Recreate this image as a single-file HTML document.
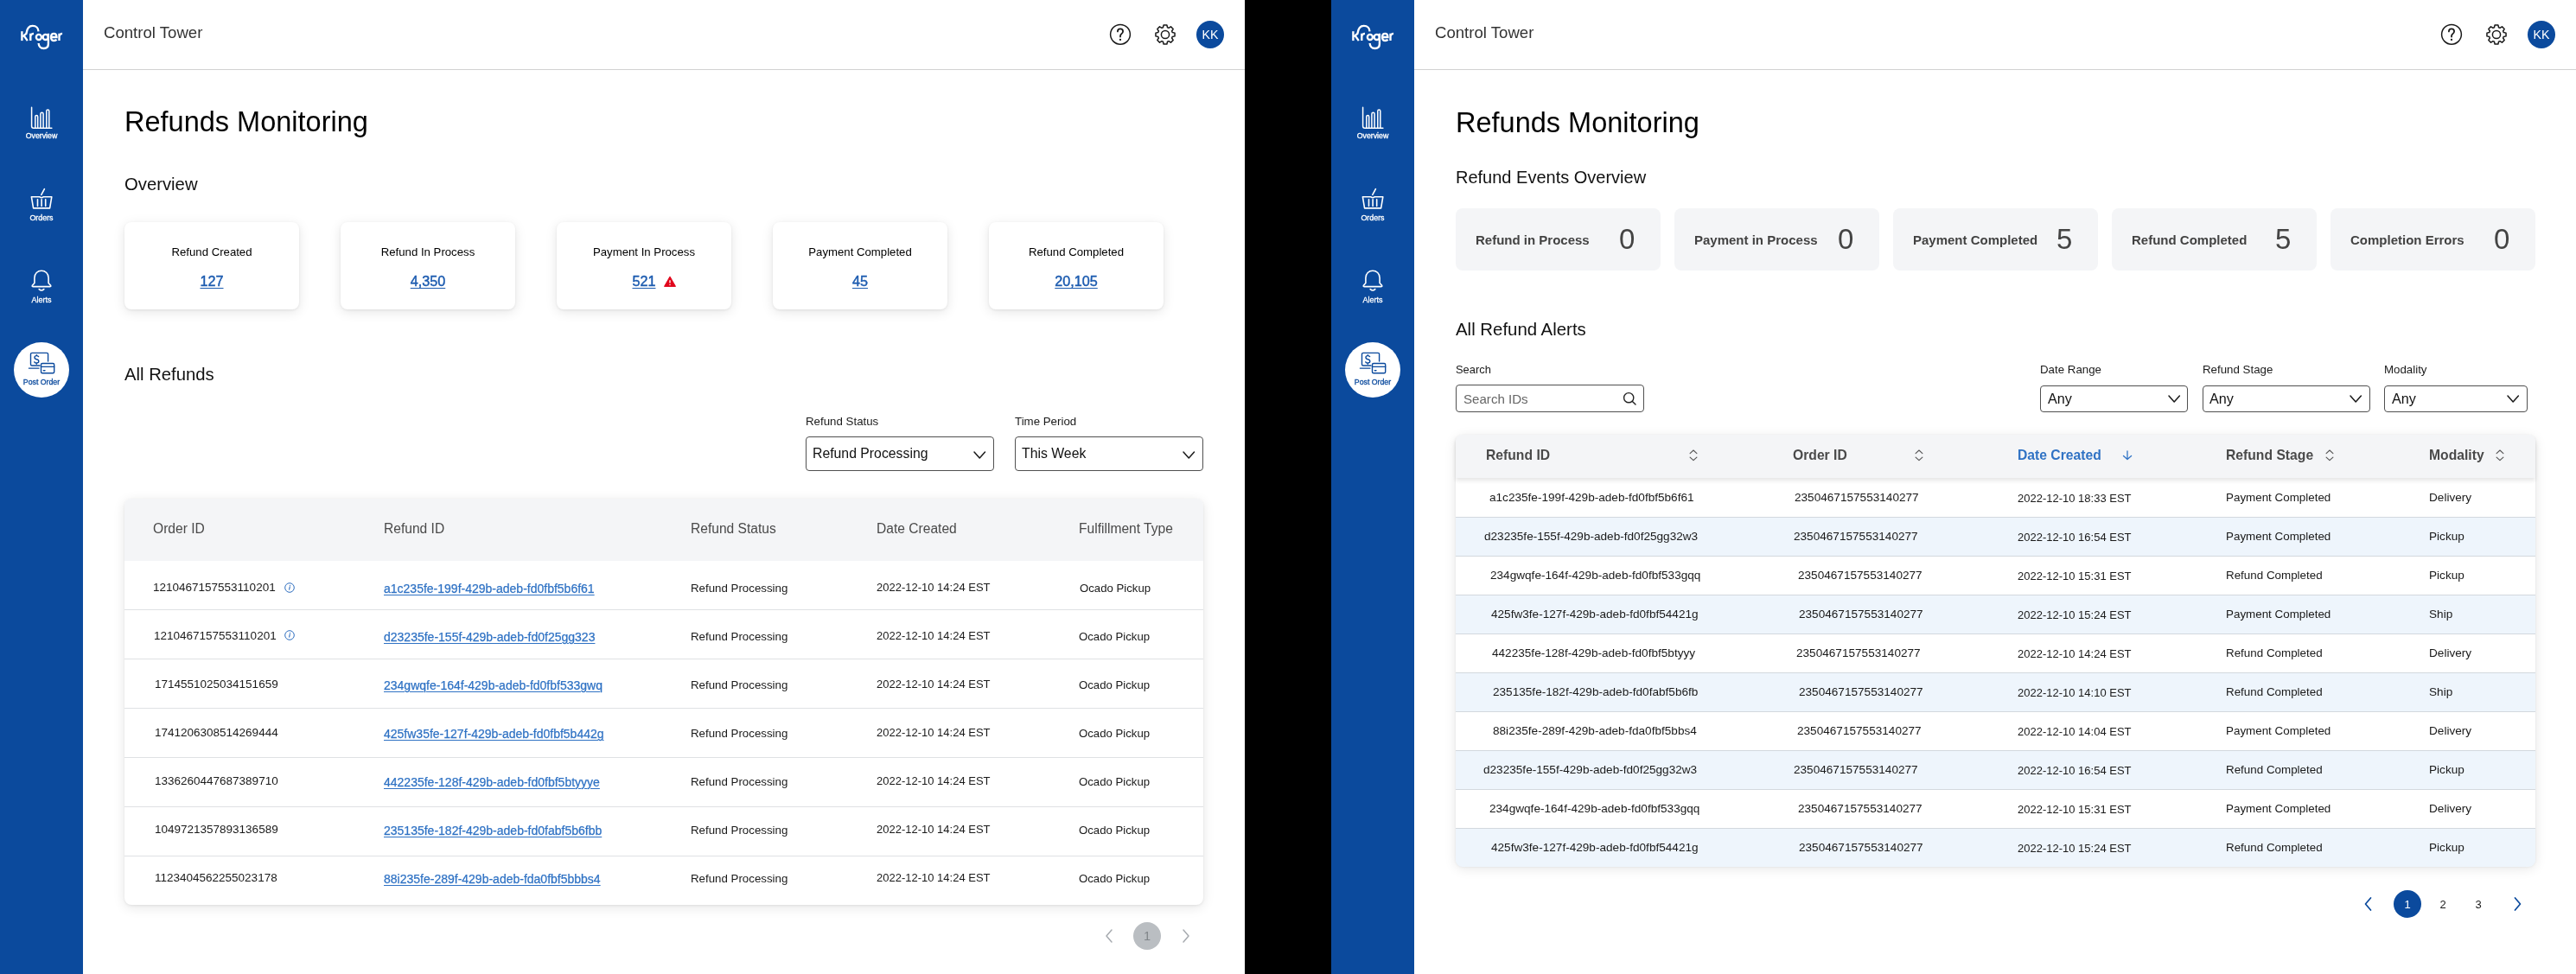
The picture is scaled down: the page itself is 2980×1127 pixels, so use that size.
<!DOCTYPE html>
<html><head><meta charset="utf-8"><title>Refunds Monitoring</title>
<style>
*{box-sizing:border-box;margin:0;padding:0}
html,body{width:2980px;height:1127px;overflow:hidden;background:#000;font-family:"Liberation Sans",sans-serif;color:#000}
.panel{position:absolute;top:0;width:1440px;height:1127px;background:#fff;overflow:hidden}
.side{position:absolute;left:0;top:0;width:96px;height:1127px;background:#0b4a9d}
.hdr{position:absolute;left:96px;top:0;width:1344px;height:81px;border-bottom:1px solid #d2d2d2;background:#fff}
.t{position:absolute;white-space:nowrap;line-height:1;will-change:transform}
.ic{position:absolute;overflow:visible}
.av{position:absolute;left:1384px;top:24px;width:32px;height:32px;border-radius:50%;background:#0b4a9d}
.po{position:absolute;left:16px;top:396px;width:64px;height:64px;border-radius:50%;background:#fff}
.cardl{position:absolute;top:257px;width:202px;height:101px;background:#fff;border-radius:8px;box-shadow:0 3px 14px rgba(0,0,0,.10),0 1px 3px rgba(0,0,0,.07)}
.cardr{position:absolute;top:241px;width:237px;height:72px;background:#f4f5f7;border-radius:8px}
.u{text-decoration:underline;text-underline-offset:2px;text-decoration-thickness:1px}
.ul{text-decoration:underline;text-underline-offset:2px;text-decoration-thickness:1px}
.sel{position:absolute;border:1px solid #505050;border-radius:4px;background:#fff}
.tbl{position:absolute;background:#fff;border-radius:8px;box-shadow:0 3px 14px rgba(0,0,0,.10),0 1px 3px rgba(0,0,0,.07);overflow:hidden}
.th{position:absolute;left:0;top:0;width:100%;background:#f4f5f7}
.thr{position:absolute;background:#f4f5f7;border-radius:8px 8px 0 0;box-shadow:0 3px 5px rgba(0,0,0,.10)}
.hl{position:absolute;height:1px;background:#dfe1e4}
.hl2{position:absolute;height:1px;background:#d3d8de}
.rr{position:absolute;height:45px}
.pg{position:absolute;width:32px;height:32px;border-radius:50%}
</style></head><body>
<div class="panel" style="left:0">
<div class="side">
<svg class="ic" style="left:0;top:0" width="96" height="70" viewBox="0 0 96 70">
<g fill="none" stroke="#fff" stroke-width="2.35" stroke-linecap="butt">
<path d="M25.4 36.2V47.1"/>
<path d="M26.2 42.4 L30.4 38.8 C31.2 32.8 33.6 29.9 37.7 29.9 C42 29.9 44.4 32.9 44.5 36.4"/>
<path d="M27.9 41.6 L31.8 47.1"/>
<path d="M35.3 47.1V38.7 M35.3 41.8 C35.9 39.6 37.2 38.9 39 38.9"/>
<circle cx="44.9" cy="42.9" r="3.05"/>
<circle cx="52.7" cy="42.9" r="3.05"/>
<path d="M55.9 38.7 V50.8 C55.9 54.3 53.8 56 50.6 56 C47.3 56 44.9 53.7 44.6 50"/>
<path d="M59.6 43 H65.5 C65.4 40.5 64 38.9 62.4 38.9 C60.3 38.9 59 40.7 59 42.9 C59 45.3 60.5 47 62.6 47 C63.8 47 64.9 46.5 65.5 45.7"/>
<path d="M68.5 47.1V38.7 M68.5 41.8 C69.1 39.6 70.3 38.9 72.1 38.9"/>
</g></svg>
<svg class="ic" style="left:0;top:115px" width="96" height="40" viewBox="0 115 96 40">
<g fill="none" stroke="#fff" stroke-width="1.5" stroke-linecap="round" stroke-linejoin="round">
<path d="M36.6 124.3 V146 Q36.6 148.2 38.8 148.2 H59.9"/>
<path d="M40.8 148 V135 Q40.8 133.5 42.25 133.5 Q43.7 133.5 43.7 135 V148"/>
<path d="M46.9 148 V131.9 Q46.9 130.3 48.5 130.3 Q50.1 130.3 50.1 131.9 V148"/>
<path d="M53.8 148 V128.6 Q53.8 127.1 55.3 127.1 Q56.8 127.1 56.8 128.6 V148"/>
</g></svg>
<div class="t " style="left:0.0px;top:153.2px;font-size:8.8px;color:#fff;width:96px;text-align:center;left:0;-webkit-text-stroke:0.3px #fff;">Overview</div>
<svg class="ic" style="left:0;top:212px" width="96" height="34" viewBox="0 212 96 34">
<g fill="none" stroke="#fff" stroke-width="1.6" stroke-linecap="round" stroke-linejoin="round">
<path d="M51.4 218.6 L47.8 225.4"/>
<path d="M36.4 227.8 H46 Q48 229.5 50 227.8 H59.8 L57.6 240.9 H38.6 Z"/>
<path d="M43.5 230.8 V238.4 M48.1 230.8 V238.4 M52.7 230.8 V238.4"/>
</g></svg>
<div class="t " style="left:0.0px;top:248.2px;font-size:8.9px;color:#fff;width:96px;text-align:center;left:0;-webkit-text-stroke:0.3px #fff;">Orders</div>
<svg class="ic" style="left:0;top:308px" width="96" height="32" viewBox="0 308 96 32">
<g fill="none" stroke="#fff" stroke-width="1.6" stroke-linecap="round" stroke-linejoin="round">
<path d="M39.9 327.5 V321.5 C39.9 316.5 43.5 313.3 48 313.3 C52.5 313.3 56.1 316.5 56.1 321.5 V327.5 L58.6 330.3 Q59.3 331.6 58 331.6 H38 Q36.7 331.6 37.4 330.3 Z"/>
<path d="M45.2 334.6 Q48 337.4 50.8 334.6"/>
</g></svg>
<div class="t " style="left:0.0px;top:343.1px;font-size:9.0px;color:#fff;width:96px;text-align:center;left:0;-webkit-text-stroke:0.3px #fff;">Alerts</div>
<div class="po"></div>
<svg class="ic" style="left:0;top:404px" width="96" height="32" viewBox="0 404 96 32">
<g fill="none" stroke="#0b4a9d" stroke-width="1.4" stroke-linecap="round" stroke-linejoin="round">
<path d="M46 423 H37 Q35.5 423 35.5 421.5 V409.8 Q35.5 408.4 37 408.4 H54.2 Q55.6 408.4 55.6 409.8 V418"/>
<path d="M33.4 426.1 H45"/>
<rect x="47.5" y="420.5" width="15.2" height="11.2" rx="1.5"/>
<path d="M47.5 424.4 H62.7"/>
<path d="M50.3 428.7 H52"/>
<path d="M44.6 412.6 Q43.8 411.6 42.3 411.6 Q40 411.6 40 413.5 Q40 415.3 42.3 415.7 Q44.8 416.2 44.8 418 Q44.8 420 42.3 420 Q40.5 420 39.8 418.8 M42.3 410.6 V411.6 M42.3 420 V421.2"/>
</g></svg>
<div class="t " style="left:0.0px;top:437.9px;font-size:8.75px;color:#0b4a9d;width:96px;text-align:center;left:0;-webkit-text-stroke:0.3px #0b4a9d;">Post Order</div>
</div>
<div class="hdr"></div>
<div class="t " style="left:120.0px;top:29.3px;font-size:18.6px;color:#333;">Control Tower</div>
<svg class="ic" style="left:1280px;top:24px" width="32" height="32" viewBox="1280 24 32 32">
<circle cx="1296" cy="39.8" r="11.4" fill="none" stroke="#1a1a1a" stroke-width="1.5"/>
<path d="M1292.9 36.4 Q1292.9 33.4 1296 33.4 Q1299.1 33.4 1299.1 36.3 Q1299.1 38.3 1297.1 39.5 Q1296 40.2 1296 42 V42.6" fill="none" stroke="#1a1a1a" stroke-width="1.8" stroke-linecap="round"/>
<circle cx="1296" cy="45.9" r="1.15" fill="#1a1a1a"/>
</svg>
<svg class="ic" style="left:1332px;top:24px" width="32" height="32" viewBox="1332 24 32 32">
<path d="M1345.46 31.78 L1346.11 28.96 L1349.89 28.96 L1350.54 31.78 L1352.01 32.39 L1354.47 30.85 L1357.15 33.53 L1355.61 35.99 L1356.22 37.46 L1359.04 38.11 L1359.04 41.89 L1356.22 42.54 L1355.61 44.01 L1357.15 46.47 L1354.47 49.15 L1352.01 47.61 L1350.54 48.22 L1349.89 51.04 L1346.11 51.04 L1345.46 48.22 L1343.99 47.61 L1341.53 49.15 L1338.85 46.47 L1340.39 44.01 L1339.78 42.54 L1336.96 41.89 L1336.96 38.11 L1339.78 37.46 L1340.39 35.99 L1338.85 33.53 L1341.53 30.85 L1343.99 32.39 Z" fill="none" stroke="#1a1a1a" stroke-width="1.5" stroke-linejoin="round"/>
<circle cx="1348" cy="40" r="4.6" fill="none" stroke="#1a1a1a" stroke-width="1.5"/>
</svg>
<div class="av"></div>
<div class="t" style="left:1380.0px;top:33.0px;width:40px;text-align:center;font-size:14.2px;color:#fff;">KK</div>
<div class="t " style="left:144.0px;top:124.5px;font-size:32.5px;color:#000;">Refunds Monitoring</div>
<div class="t " style="left:144.0px;top:202.8px;font-size:20.3px;color:#111;">Overview</div>
<div class="cardl" style="left:144px"></div>
<div class="t" style="left:145.0px;top:284.8px;width:200px;text-align:center;font-size:13.2px;color:#000;">Refund Created</div>
<div class="t" style="left:145.0px;top:317.0px;width:200px;text-align:center;font-size:16.2px;color:#1d5cb0;-webkit-text-stroke:0.45px #1d5cb0;"><span class="u">127</span></div>
<div class="cardl" style="left:394px"></div>
<div class="t" style="left:395.0px;top:284.8px;width:200px;text-align:center;font-size:13.2px;color:#000;">Refund In Process</div>
<div class="t" style="left:395.0px;top:317.0px;width:200px;text-align:center;font-size:16.2px;color:#1d5cb0;-webkit-text-stroke:0.45px #1d5cb0;"><span class="u">4,350</span></div>
<div class="cardl" style="left:644px"></div>
<div class="t" style="left:645.0px;top:284.8px;width:200px;text-align:center;font-size:13.2px;color:#000;">Payment In Process</div>
<div class="t" style="left:695.0px;top:317.0px;width:100px;text-align:center;font-size:16.2px;color:#1d5cb0;-webkit-text-stroke:0.45px #1d5cb0;"><span class="u">521</span></div>
<svg class="ic" style="left:767px;top:318px" width="16" height="16" viewBox="0 0 16 16">
<path d="M8 2 L14.5 13.4 H1.5 Z" fill="#e1061b" stroke="#e1061b" stroke-width="1" stroke-linejoin="round"/>
<path d="M8 6.2 V9.6" stroke="#fff" stroke-width="1.3"/><circle cx="8" cy="11.4" r="0.75" fill="#fff"/></svg>
<div class="cardl" style="left:894px"></div>
<div class="t" style="left:895.0px;top:284.8px;width:200px;text-align:center;font-size:13.2px;color:#000;">Payment Completed</div>
<div class="t" style="left:895.0px;top:317.0px;width:200px;text-align:center;font-size:16.2px;color:#1d5cb0;-webkit-text-stroke:0.45px #1d5cb0;"><span class="u">45</span></div>
<div class="cardl" style="left:1144px"></div>
<div class="t" style="left:1145.0px;top:284.8px;width:200px;text-align:center;font-size:13.2px;color:#000;">Refund Completed</div>
<div class="t" style="left:1145.0px;top:317.0px;width:200px;text-align:center;font-size:16.2px;color:#1d5cb0;-webkit-text-stroke:0.45px #1d5cb0;"><span class="u">20,105</span></div>
<div class="t " style="left:144.0px;top:422.8px;font-size:20.3px;color:#111;">All Refunds</div>
<div class="t " style="left:932.0px;top:480.9px;font-size:13.3px;color:#1a1a1a;">Refund Status</div>
<div class="t " style="left:1174.0px;top:480.9px;font-size:13.3px;color:#1a1a1a;">Time Period</div>
<div class="sel" style="left:932px;top:505px;width:218px;height:40px"></div>
<div class="sel" style="left:1174px;top:505px;width:218px;height:40px"></div>
<div class="t " style="left:940.0px;top:517.3px;font-size:15.8px;color:#111;">Refund Processing</div>
<div class="t " style="left:1182.0px;top:517.3px;font-size:15.8px;color:#111;">This Week</div>
<svg class="ic" style="left:1125px;top:520.5px" width="16.5" height="11" viewBox="1125 520.5 16.5 11"><path d="M1127 522.5 L1133.25 529.5 L1139.5 522.5" fill="none" stroke="#1a1a1a" stroke-width="1.5" stroke-linecap="round" stroke-linejoin="round"/></svg>
<svg class="ic" style="left:1367px;top:520.5px" width="16.5" height="11" viewBox="1367 520.5 16.5 11"><path d="M1369 522.5 L1375.25 529.5 L1381.5 522.5" fill="none" stroke="#1a1a1a" stroke-width="1.5" stroke-linecap="round" stroke-linejoin="round"/></svg>
<div class="tbl" style="left:144px;top:577px;width:1248px;height:470px"><div class="th" style="height:72px"></div></div>
<div class="t " style="left:176.7px;top:604.3px;font-size:15.6px;color:#4a4a4a;">Order ID</div>
<div class="t " style="left:444.0px;top:604.3px;font-size:15.6px;color:#4a4a4a;">Refund ID</div>
<div class="t " style="left:799.3px;top:604.3px;font-size:15.6px;color:#4a4a4a;">Refund Status</div>
<div class="t " style="left:1014.2px;top:604.3px;font-size:15.6px;color:#4a4a4a;">Date Created</div>
<div class="t " style="left:1248.0px;top:604.3px;font-size:15.6px;color:#4a4a4a;">Fulfillment Type</div>
<div class="hl" style="left:144px;top:705px;width:1248px"></div>
<div class="hl" style="left:144px;top:762px;width:1248px"></div>
<div class="hl" style="left:144px;top:819px;width:1248px"></div>
<div class="hl" style="left:144px;top:876px;width:1248px"></div>
<div class="hl" style="left:144px;top:933px;width:1248px"></div>
<div class="hl" style="left:144px;top:990px;width:1248px"></div>
<div class="t " style="left:176.7px;top:672.6px;font-size:13.5px;color:#1a1a1a;">1210467157553110201</div>
<svg class="ic" style="left:327px;top:671.5px" width="16" height="16" viewBox="0 0 16 16"><circle cx="8" cy="8" r="5.3" fill="none" stroke="#2f6fc0" stroke-width="1"/><path d="M8.3 6.9 L7.6 10.2" stroke="#2f6fc0" stroke-width="1.1" stroke-linecap="round"/><circle cx="8.5" cy="5.3" r="0.6" fill="#2f6fc0"/></svg>
<div class="t " style="left:444.0px;top:674.1px;font-size:14.0px;color:#2f72c4;-webkit-text-stroke:0.25px #2f72c4;"><span class="ul">a1c235fe-199f-429b-adeb-fd0fbf5b6f61</span></div>
<div class="t " style="left:799.3px;top:673.7px;font-size:13.3px;color:#1a1a1a;">Refund Processing</div>
<div class="t " style="left:1014.2px;top:673.0px;font-size:13.0px;color:#1a1a1a;">2022-12-10 14:24 EST</div>
<div class="t " style="left:1249.0px;top:673.8px;font-size:13.2px;color:#1a1a1a;">Ocado Pickup</div>
<div class="t " style="left:178.0px;top:728.6px;font-size:13.5px;color:#1a1a1a;">1210467157553110201</div>
<svg class="ic" style="left:327px;top:726.5px" width="16" height="16" viewBox="0 0 16 16"><circle cx="8" cy="8" r="5.3" fill="none" stroke="#2f6fc0" stroke-width="1"/><path d="M8.3 6.9 L7.6 10.2" stroke="#2f6fc0" stroke-width="1.1" stroke-linecap="round"/><circle cx="8.5" cy="5.3" r="0.6" fill="#2f6fc0"/></svg>
<div class="t " style="left:444.0px;top:730.1px;font-size:14.0px;color:#2f72c4;-webkit-text-stroke:0.25px #2f72c4;"><span class="ul">d23235fe-155f-429b-adeb-fd0f25gg323</span></div>
<div class="t " style="left:799.3px;top:729.7px;font-size:13.3px;color:#1a1a1a;">Refund Processing</div>
<div class="t " style="left:1014.2px;top:729.0px;font-size:13.0px;color:#1a1a1a;">2022-12-10 14:24 EST</div>
<div class="t " style="left:1248.0px;top:729.8px;font-size:13.2px;color:#1a1a1a;">Ocado Pickup</div>
<div class="t " style="left:178.5px;top:784.6px;font-size:13.5px;color:#1a1a1a;">1714551025034151659</div>
<div class="t " style="left:444.0px;top:786.1px;font-size:14.0px;color:#2f72c4;-webkit-text-stroke:0.25px #2f72c4;"><span class="ul">234gwqfe-164f-429b-adeb-fd0fbf533gwq</span></div>
<div class="t " style="left:799.3px;top:785.7px;font-size:13.3px;color:#1a1a1a;">Refund Processing</div>
<div class="t " style="left:1014.2px;top:785.0px;font-size:13.0px;color:#1a1a1a;">2022-12-10 14:24 EST</div>
<div class="t " style="left:1248.0px;top:785.8px;font-size:13.2px;color:#1a1a1a;">Ocado Pickup</div>
<div class="t " style="left:178.5px;top:840.6px;font-size:13.5px;color:#1a1a1a;">1741206308514269444</div>
<div class="t " style="left:444.0px;top:842.1px;font-size:14.0px;color:#2f72c4;-webkit-text-stroke:0.25px #2f72c4;"><span class="ul">425fw35fe-127f-429b-adeb-fd0fbf5b442g</span></div>
<div class="t " style="left:799.3px;top:841.7px;font-size:13.3px;color:#1a1a1a;">Refund Processing</div>
<div class="t " style="left:1014.2px;top:841.0px;font-size:13.0px;color:#1a1a1a;">2022-12-10 14:24 EST</div>
<div class="t " style="left:1248.0px;top:841.8px;font-size:13.2px;color:#1a1a1a;">Ocado Pickup</div>
<div class="t " style="left:178.5px;top:896.6px;font-size:13.5px;color:#1a1a1a;">1336260447687389710</div>
<div class="t " style="left:444.0px;top:898.1px;font-size:14.0px;color:#2f72c4;-webkit-text-stroke:0.25px #2f72c4;"><span class="ul">442235fe-128f-429b-adeb-fd0fbf5btyyye</span></div>
<div class="t " style="left:799.3px;top:897.7px;font-size:13.3px;color:#1a1a1a;">Refund Processing</div>
<div class="t " style="left:1014.2px;top:897.0px;font-size:13.0px;color:#1a1a1a;">2022-12-10 14:24 EST</div>
<div class="t " style="left:1248.0px;top:897.8px;font-size:13.2px;color:#1a1a1a;">Ocado Pickup</div>
<div class="t " style="left:178.5px;top:952.6px;font-size:13.5px;color:#1a1a1a;">1049721357893136589</div>
<div class="t " style="left:444.0px;top:954.1px;font-size:14.0px;color:#2f72c4;-webkit-text-stroke:0.25px #2f72c4;"><span class="ul">235135fe-182f-429b-adeb-fd0fabf5b6fbb</span></div>
<div class="t " style="left:799.3px;top:953.7px;font-size:13.3px;color:#1a1a1a;">Refund Processing</div>
<div class="t " style="left:1014.2px;top:953.0px;font-size:13.0px;color:#1a1a1a;">2022-12-10 14:24 EST</div>
<div class="t " style="left:1248.0px;top:953.8px;font-size:13.2px;color:#1a1a1a;">Ocado Pickup</div>
<div class="t " style="left:178.5px;top:1008.6px;font-size:13.5px;color:#1a1a1a;">1123404562255023178</div>
<div class="t " style="left:444.0px;top:1010.1px;font-size:14.0px;color:#2f72c4;-webkit-text-stroke:0.25px #2f72c4;"><span class="ul">88i235fe-289f-429b-adeb-fda0fbf5bbbs4</span></div>
<div class="t " style="left:799.3px;top:1009.7px;font-size:13.3px;color:#1a1a1a;">Refund Processing</div>
<div class="t " style="left:1014.2px;top:1009.0px;font-size:13.0px;color:#1a1a1a;">2022-12-10 14:24 EST</div>
<div class="t " style="left:1248.0px;top:1009.8px;font-size:13.2px;color:#1a1a1a;">Ocado Pickup</div>
<svg class="ic" style="left:1274px;top:1073px" width="20" height="20" viewBox="1274 1073 20 20"><path d="M1286 1076 L1280 1083 L1286 1090" fill="none" stroke="#a7abb0" stroke-width="1.5" stroke-linecap="round" stroke-linejoin="round"/></svg>
<div class="pg" style="left:1311px;top:1067px;background:#babec2"></div>
<div class="t" style="left:1312.0px;top:1076.2px;width:30px;text-align:center;font-size:14.5px;color:#7f8489;">1</div>
<svg class="ic" style="left:1364px;top:1073px" width="20" height="20" viewBox="1364 1073 20 20"><path d="M1369 1076 L1375 1083 L1369 1090" fill="none" stroke="#a7abb0" stroke-width="1.5" stroke-linecap="round" stroke-linejoin="round"/></svg>
</div>
<div class="panel" style="left:1540px">
<div class="side">
<svg class="ic" style="left:0;top:0" width="96" height="70" viewBox="0 0 96 70">
<g fill="none" stroke="#fff" stroke-width="2.35" stroke-linecap="butt">
<path d="M25.4 36.2V47.1"/>
<path d="M26.2 42.4 L30.4 38.8 C31.2 32.8 33.6 29.9 37.7 29.9 C42 29.9 44.4 32.9 44.5 36.4"/>
<path d="M27.9 41.6 L31.8 47.1"/>
<path d="M35.3 47.1V38.7 M35.3 41.8 C35.9 39.6 37.2 38.9 39 38.9"/>
<circle cx="44.9" cy="42.9" r="3.05"/>
<circle cx="52.7" cy="42.9" r="3.05"/>
<path d="M55.9 38.7 V50.8 C55.9 54.3 53.8 56 50.6 56 C47.3 56 44.9 53.7 44.6 50"/>
<path d="M59.6 43 H65.5 C65.4 40.5 64 38.9 62.4 38.9 C60.3 38.9 59 40.7 59 42.9 C59 45.3 60.5 47 62.6 47 C63.8 47 64.9 46.5 65.5 45.7"/>
<path d="M68.5 47.1V38.7 M68.5 41.8 C69.1 39.6 70.3 38.9 72.1 38.9"/>
</g></svg>
<svg class="ic" style="left:0;top:115px" width="96" height="40" viewBox="0 115 96 40">
<g fill="none" stroke="#fff" stroke-width="1.5" stroke-linecap="round" stroke-linejoin="round">
<path d="M36.6 124.3 V146 Q36.6 148.2 38.8 148.2 H59.9"/>
<path d="M40.8 148 V135 Q40.8 133.5 42.25 133.5 Q43.7 133.5 43.7 135 V148"/>
<path d="M46.9 148 V131.9 Q46.9 130.3 48.5 130.3 Q50.1 130.3 50.1 131.9 V148"/>
<path d="M53.8 148 V128.6 Q53.8 127.1 55.3 127.1 Q56.8 127.1 56.8 128.6 V148"/>
</g></svg>
<div class="t " style="left:0.0px;top:153.2px;font-size:8.8px;color:#fff;width:96px;text-align:center;left:0;-webkit-text-stroke:0.3px #fff;">Overview</div>
<svg class="ic" style="left:0;top:212px" width="96" height="34" viewBox="0 212 96 34">
<g fill="none" stroke="#fff" stroke-width="1.6" stroke-linecap="round" stroke-linejoin="round">
<path d="M51.4 218.6 L47.8 225.4"/>
<path d="M36.4 227.8 H46 Q48 229.5 50 227.8 H59.8 L57.6 240.9 H38.6 Z"/>
<path d="M43.5 230.8 V238.4 M48.1 230.8 V238.4 M52.7 230.8 V238.4"/>
</g></svg>
<div class="t " style="left:0.0px;top:248.2px;font-size:8.9px;color:#fff;width:96px;text-align:center;left:0;-webkit-text-stroke:0.3px #fff;">Orders</div>
<svg class="ic" style="left:0;top:308px" width="96" height="32" viewBox="0 308 96 32">
<g fill="none" stroke="#fff" stroke-width="1.6" stroke-linecap="round" stroke-linejoin="round">
<path d="M39.9 327.5 V321.5 C39.9 316.5 43.5 313.3 48 313.3 C52.5 313.3 56.1 316.5 56.1 321.5 V327.5 L58.6 330.3 Q59.3 331.6 58 331.6 H38 Q36.7 331.6 37.4 330.3 Z"/>
<path d="M45.2 334.6 Q48 337.4 50.8 334.6"/>
</g></svg>
<div class="t " style="left:0.0px;top:343.1px;font-size:9.0px;color:#fff;width:96px;text-align:center;left:0;-webkit-text-stroke:0.3px #fff;">Alerts</div>
<div class="po"></div>
<svg class="ic" style="left:0;top:404px" width="96" height="32" viewBox="0 404 96 32">
<g fill="none" stroke="#0b4a9d" stroke-width="1.4" stroke-linecap="round" stroke-linejoin="round">
<path d="M46 423 H37 Q35.5 423 35.5 421.5 V409.8 Q35.5 408.4 37 408.4 H54.2 Q55.6 408.4 55.6 409.8 V418"/>
<path d="M33.4 426.1 H45"/>
<rect x="47.5" y="420.5" width="15.2" height="11.2" rx="1.5"/>
<path d="M47.5 424.4 H62.7"/>
<path d="M50.3 428.7 H52"/>
<path d="M44.6 412.6 Q43.8 411.6 42.3 411.6 Q40 411.6 40 413.5 Q40 415.3 42.3 415.7 Q44.8 416.2 44.8 418 Q44.8 420 42.3 420 Q40.5 420 39.8 418.8 M42.3 410.6 V411.6 M42.3 420 V421.2"/>
</g></svg>
<div class="t " style="left:0.0px;top:437.9px;font-size:8.75px;color:#0b4a9d;width:96px;text-align:center;left:0;-webkit-text-stroke:0.3px #0b4a9d;">Post Order</div>
</div>
<div class="hdr"></div>
<div class="t " style="left:120.0px;top:29.3px;font-size:18.6px;color:#333;">Control Tower</div>
<svg class="ic" style="left:1280px;top:24px" width="32" height="32" viewBox="1280 24 32 32">
<circle cx="1296" cy="39.8" r="11.4" fill="none" stroke="#1a1a1a" stroke-width="1.5"/>
<path d="M1292.9 36.4 Q1292.9 33.4 1296 33.4 Q1299.1 33.4 1299.1 36.3 Q1299.1 38.3 1297.1 39.5 Q1296 40.2 1296 42 V42.6" fill="none" stroke="#1a1a1a" stroke-width="1.8" stroke-linecap="round"/>
<circle cx="1296" cy="45.9" r="1.15" fill="#1a1a1a"/>
</svg>
<svg class="ic" style="left:1332px;top:24px" width="32" height="32" viewBox="1332 24 32 32">
<path d="M1345.46 31.78 L1346.11 28.96 L1349.89 28.96 L1350.54 31.78 L1352.01 32.39 L1354.47 30.85 L1357.15 33.53 L1355.61 35.99 L1356.22 37.46 L1359.04 38.11 L1359.04 41.89 L1356.22 42.54 L1355.61 44.01 L1357.15 46.47 L1354.47 49.15 L1352.01 47.61 L1350.54 48.22 L1349.89 51.04 L1346.11 51.04 L1345.46 48.22 L1343.99 47.61 L1341.53 49.15 L1338.85 46.47 L1340.39 44.01 L1339.78 42.54 L1336.96 41.89 L1336.96 38.11 L1339.78 37.46 L1340.39 35.99 L1338.85 33.53 L1341.53 30.85 L1343.99 32.39 Z" fill="none" stroke="#1a1a1a" stroke-width="1.5" stroke-linejoin="round"/>
<circle cx="1348" cy="40" r="4.6" fill="none" stroke="#1a1a1a" stroke-width="1.5"/>
</svg>
<div class="av"></div>
<div class="t" style="left:1380.0px;top:33.0px;width:40px;text-align:center;font-size:14.2px;color:#fff;">KK</div>
<div class="t " style="left:144.0px;top:125.5px;font-size:32.5px;color:#000;">Refunds Monitoring</div>
<div class="t " style="left:144.0px;top:195.3px;font-size:20.0px;color:#111;">Refund Events Overview</div>
<div class="cardr" style="left:144px"></div>
<div class="t " style="left:167.0px;top:269.6px;font-size:15.0px;font-weight:700;color:#424242;">Refund in Process</div>
<div class="t " style="left:333.0px;top:260.1px;font-size:33px;color:#444;">0</div>
<div class="cardr" style="left:397px"></div>
<div class="t " style="left:420.0px;top:269.6px;font-size:15.0px;font-weight:700;color:#424242;">Payment in Process</div>
<div class="t " style="left:586.0px;top:260.1px;font-size:33px;color:#444;">0</div>
<div class="cardr" style="left:650px"></div>
<div class="t " style="left:673.0px;top:269.6px;font-size:15.0px;font-weight:700;color:#424242;">Payment Completed</div>
<div class="t " style="left:839.0px;top:260.1px;font-size:33px;color:#444;">5</div>
<div class="cardr" style="left:903px"></div>
<div class="t " style="left:926.0px;top:269.6px;font-size:15.0px;font-weight:700;color:#424242;">Refund Completed</div>
<div class="t " style="left:1092.0px;top:260.1px;font-size:33px;color:#444;">5</div>
<div class="cardr" style="left:1156px"></div>
<div class="t " style="left:1179.0px;top:269.6px;font-size:15.0px;font-weight:700;color:#424242;">Completion Errors</div>
<div class="t " style="left:1345.0px;top:260.1px;font-size:33px;color:#444;">0</div>
<div class="t " style="left:144.0px;top:371.2px;font-size:20.4px;color:#111;">All Refund Alerts</div>
<div class="t " style="left:144.0px;top:421.6px;font-size:12.9px;color:#1a1a1a;">Search</div>
<div class="sel" style="left:144px;top:445px;width:218px;height:32px"></div>
<div class="t " style="left:152.6px;top:453.7px;font-size:15.1px;color:#666;">Search IDs</div>
<svg class="ic" style="left:335px;top:451px" width="20" height="20" viewBox="0 0 20 20"><circle cx="9.2" cy="9.2" r="5.6" fill="none" stroke="#222" stroke-width="1.4"/><path d="M13.2 13.2 L17 17" stroke="#222" stroke-width="1.4" stroke-linecap="round"/></svg>
<div class="t " style="left:820.4px;top:421.0px;font-size:13.3px;color:#1a1a1a;">Date Range</div>
<div class="sel" style="left:820.4px;top:445.5px;width:171px;height:31px"></div>
<div class="t " style="left:828.6px;top:453.3px;font-size:16.2px;color:#111;">Any</div>
<svg class="ic" style="left:966.9px;top:456px" width="16.4" height="11" viewBox="966.9 456 16.4 11"><path d="M968.9 458 L975.1 465 L981.3 458" fill="none" stroke="#1a1a1a" stroke-width="1.5" stroke-linecap="round" stroke-linejoin="round"/></svg>
<div class="t " style="left:1008.2px;top:421.0px;font-size:13.3px;color:#1a1a1a;">Refund Stage</div>
<div class="sel" style="left:1008.2px;top:445.5px;width:193.5px;height:31px"></div>
<div class="t " style="left:1016.4px;top:453.3px;font-size:16.2px;color:#111;">Any</div>
<svg class="ic" style="left:1177.2px;top:456px" width="16.4" height="11" viewBox="1177.2 456 16.4 11"><path d="M1179.2 458 L1185.4 465 L1191.6000000000001 458" fill="none" stroke="#1a1a1a" stroke-width="1.5" stroke-linecap="round" stroke-linejoin="round"/></svg>
<div class="t " style="left:1218.4px;top:421.0px;font-size:13.3px;color:#1a1a1a;">Modality</div>
<div class="sel" style="left:1218.4px;top:445.5px;width:165.2px;height:31px"></div>
<div class="t " style="left:1226.6px;top:453.3px;font-size:16.2px;color:#111;">Any</div>
<svg class="ic" style="left:1359.1px;top:456px" width="16.4" height="11" viewBox="1359.1 456 16.4 11"><path d="M1361.1 458 L1367.3 465 L1373.5 458" fill="none" stroke="#1a1a1a" stroke-width="1.5" stroke-linecap="round" stroke-linejoin="round"/></svg>
<div class="tbl" style="left:144px;top:503px;width:1249px;height:499px"></div>
<div class="rr" style="left:144px;top:553px;width:1249px;background:#fff"></div>
<div class="t " style="left:182.8px;top:569.2px;font-size:13.6px;color:#1a1a1a;">a1c235fe-199f-429b-adeb-fd0fbf5b6f61</div>
<div class="t " style="left:536.0px;top:569.2px;font-size:13.6px;color:#1a1a1a;">2350467157553140277</div>
<div class="t " style="left:794.0px;top:569.7px;font-size:13.0px;color:#1a1a1a;">2022-12-10 18:33 EST</div>
<div class="t " style="left:1035.0px;top:569.4px;font-size:13.4px;color:#1a1a1a;">Payment Completed</div>
<div class="t " style="left:1269.5px;top:569.2px;font-size:13.6px;color:#1a1a1a;">Delivery</div>
<div class="rr" style="left:144px;top:598px;width:1249px;background:#eef5fc"></div>
<div class="hl2" style="left:144px;top:598px;width:1249px"></div>
<div class="t " style="left:176.6px;top:614.2px;font-size:13.6px;color:#1a1a1a;">d23235fe-155f-429b-adeb-fd0f25gg32w3</div>
<div class="t " style="left:535.0px;top:614.2px;font-size:13.6px;color:#1a1a1a;">2350467157553140277</div>
<div class="t " style="left:794.0px;top:614.7px;font-size:13.0px;color:#1a1a1a;">2022-12-10 16:54 EST</div>
<div class="t " style="left:1035.0px;top:614.4px;font-size:13.4px;color:#1a1a1a;">Payment Completed</div>
<div class="t " style="left:1269.5px;top:614.2px;font-size:13.6px;color:#1a1a1a;">Pickup</div>
<div class="rr" style="left:144px;top:643px;width:1249px;background:#fff"></div>
<div class="hl2" style="left:144px;top:643px;width:1249px"></div>
<div class="t " style="left:183.5px;top:659.2px;font-size:13.6px;color:#1a1a1a;">234gwqfe-164f-429b-adeb-fd0fbf533gqq</div>
<div class="t " style="left:540.3px;top:659.2px;font-size:13.6px;color:#1a1a1a;">2350467157553140277</div>
<div class="t " style="left:794.0px;top:659.7px;font-size:13.0px;color:#1a1a1a;">2022-12-10 15:31 EST</div>
<div class="t " style="left:1035.0px;top:659.4px;font-size:13.4px;color:#1a1a1a;">Refund Completed</div>
<div class="t " style="left:1269.5px;top:659.2px;font-size:13.6px;color:#1a1a1a;">Pickup</div>
<div class="rr" style="left:144px;top:688px;width:1249px;background:#eef5fc"></div>
<div class="hl2" style="left:144px;top:688px;width:1249px"></div>
<div class="t " style="left:185.0px;top:704.2px;font-size:13.6px;color:#1a1a1a;">425fw3fe-127f-429b-adeb-fd0fbf54421g</div>
<div class="t " style="left:541.0px;top:704.2px;font-size:13.6px;color:#1a1a1a;">2350467157553140277</div>
<div class="t " style="left:794.0px;top:704.7px;font-size:13.0px;color:#1a1a1a;">2022-12-10 15:24 EST</div>
<div class="t " style="left:1035.0px;top:704.4px;font-size:13.4px;color:#1a1a1a;">Payment Completed</div>
<div class="t " style="left:1269.5px;top:704.2px;font-size:13.6px;color:#1a1a1a;">Ship</div>
<div class="rr" style="left:144px;top:733px;width:1249px;background:#fff"></div>
<div class="hl2" style="left:144px;top:733px;width:1249px"></div>
<div class="t " style="left:185.7px;top:749.2px;font-size:13.6px;color:#1a1a1a;">442235fe-128f-429b-adeb-fd0fbf5btyyy</div>
<div class="t " style="left:538.3px;top:749.2px;font-size:13.6px;color:#1a1a1a;">2350467157553140277</div>
<div class="t " style="left:794.0px;top:749.7px;font-size:13.0px;color:#1a1a1a;">2022-12-10 14:24 EST</div>
<div class="t " style="left:1035.0px;top:749.4px;font-size:13.4px;color:#1a1a1a;">Refund Completed</div>
<div class="t " style="left:1269.5px;top:749.2px;font-size:13.6px;color:#1a1a1a;">Delivery</div>
<div class="rr" style="left:144px;top:778px;width:1249px;background:#eef5fc"></div>
<div class="hl2" style="left:144px;top:778px;width:1249px"></div>
<div class="t " style="left:186.5px;top:794.2px;font-size:13.6px;color:#1a1a1a;">235135fe-182f-429b-adeb-fd0fabf5b6fb</div>
<div class="t " style="left:540.5px;top:794.2px;font-size:13.6px;color:#1a1a1a;">2350467157553140277</div>
<div class="t " style="left:794.0px;top:794.7px;font-size:13.0px;color:#1a1a1a;">2022-12-10 14:10 EST</div>
<div class="t " style="left:1035.0px;top:794.4px;font-size:13.4px;color:#1a1a1a;">Refund Completed</div>
<div class="t " style="left:1269.5px;top:794.2px;font-size:13.6px;color:#1a1a1a;">Ship</div>
<div class="rr" style="left:144px;top:823px;width:1249px;background:#fff"></div>
<div class="hl2" style="left:144px;top:823px;width:1249px"></div>
<div class="t " style="left:186.5px;top:839.2px;font-size:13.6px;color:#1a1a1a;">88i235fe-289f-429b-adeb-fda0fbf5bbs4</div>
<div class="t " style="left:539.0px;top:839.2px;font-size:13.6px;color:#1a1a1a;">2350467157553140277</div>
<div class="t " style="left:794.0px;top:839.7px;font-size:13.0px;color:#1a1a1a;">2022-12-10 14:04 EST</div>
<div class="t " style="left:1035.0px;top:839.4px;font-size:13.4px;color:#1a1a1a;">Payment Completed</div>
<div class="t " style="left:1269.5px;top:839.2px;font-size:13.6px;color:#1a1a1a;">Delivery</div>
<div class="rr" style="left:144px;top:868px;width:1249px;background:#eef5fc"></div>
<div class="hl2" style="left:144px;top:868px;width:1249px"></div>
<div class="t " style="left:176.4px;top:884.2px;font-size:13.6px;color:#1a1a1a;">d23235fe-155f-429b-adeb-fd0f25gg32w3</div>
<div class="t " style="left:535.3px;top:884.2px;font-size:13.6px;color:#1a1a1a;">2350467157553140277</div>
<div class="t " style="left:794.0px;top:884.7px;font-size:13.0px;color:#1a1a1a;">2022-12-10 16:54 EST</div>
<div class="t " style="left:1035.0px;top:884.4px;font-size:13.4px;color:#1a1a1a;">Refund Completed</div>
<div class="t " style="left:1269.5px;top:884.2px;font-size:13.6px;color:#1a1a1a;">Pickup</div>
<div class="rr" style="left:144px;top:913px;width:1249px;background:#fff"></div>
<div class="hl2" style="left:144px;top:913px;width:1249px"></div>
<div class="t " style="left:183.0px;top:929.2px;font-size:13.6px;color:#1a1a1a;">234gwqfe-164f-429b-adeb-fd0fbf533gqq</div>
<div class="t " style="left:540.0px;top:929.2px;font-size:13.6px;color:#1a1a1a;">2350467157553140277</div>
<div class="t " style="left:794.0px;top:929.7px;font-size:13.0px;color:#1a1a1a;">2022-12-10 15:31 EST</div>
<div class="t " style="left:1035.0px;top:929.4px;font-size:13.4px;color:#1a1a1a;">Payment Completed</div>
<div class="t " style="left:1269.5px;top:929.2px;font-size:13.6px;color:#1a1a1a;">Delivery</div>
<div class="rr" style="left:144px;top:958px;width:1249px;background:#eef5fc;border-radius:0 0 8px 8px"></div>
<div class="hl2" style="left:144px;top:958px;width:1249px"></div>
<div class="t " style="left:185.0px;top:974.2px;font-size:13.6px;color:#1a1a1a;">425fw3fe-127f-429b-adeb-fd0fbf54421g</div>
<div class="t " style="left:541.0px;top:974.2px;font-size:13.6px;color:#1a1a1a;">2350467157553140277</div>
<div class="t " style="left:794.0px;top:974.7px;font-size:13.0px;color:#1a1a1a;">2022-12-10 15:24 EST</div>
<div class="t " style="left:1035.0px;top:974.4px;font-size:13.4px;color:#1a1a1a;">Refund Completed</div>
<div class="t " style="left:1269.5px;top:974.2px;font-size:13.6px;color:#1a1a1a;">Pickup</div>
<div class="thr" style="left:144px;top:503px;width:1249px;height:50px"></div>
<div class="t " style="left:179.3px;top:518.7px;font-size:15.7px;font-weight:700;color:#4a4a4a;">Refund ID</div>
<div class="t " style="left:534.0px;top:518.7px;font-size:15.7px;font-weight:700;color:#4a4a4a;">Order ID</div>
<div class="t " style="left:794.0px;top:518.7px;font-size:15.7px;font-weight:700;color:#2f72c4;">Date Created</div>
<div class="t " style="left:1035.3px;top:518.7px;font-size:15.7px;font-weight:700;color:#4a4a4a;">Refund Stage</div>
<div class="t " style="left:1270.0px;top:518.7px;font-size:15.7px;font-weight:700;color:#4a4a4a;">Modality</div>
<svg class="ic" style="left:412.8px;top:520px" width="12" height="16" viewBox="0 0 12 16"><path d="M2.1 4.6 L6 1 L9.9 4.6 M2.1 9.1 L6 12.7 L9.9 9.1" fill="none" stroke="#555" stroke-width="1.15" stroke-linecap="round" stroke-linejoin="round"/></svg>
<svg class="ic" style="left:673.8px;top:520px" width="12" height="16" viewBox="0 0 12 16"><path d="M2.1 4.6 L6 1 L9.9 4.6 M2.1 9.1 L6 12.7 L9.9 9.1" fill="none" stroke="#555" stroke-width="1.15" stroke-linecap="round" stroke-linejoin="round"/></svg>
<svg class="ic" style="left:1149px;top:520px" width="12" height="16" viewBox="0 0 12 16"><path d="M2.1 4.6 L6 1 L9.9 4.6 M2.1 9.1 L6 12.7 L9.9 9.1" fill="none" stroke="#555" stroke-width="1.15" stroke-linecap="round" stroke-linejoin="round"/></svg>
<svg class="ic" style="left:1345.8px;top:520px" width="12" height="16" viewBox="0 0 12 16"><path d="M2.1 4.6 L6 1 L9.9 4.6 M2.1 9.1 L6 12.7 L9.9 9.1" fill="none" stroke="#555" stroke-width="1.15" stroke-linecap="round" stroke-linejoin="round"/></svg>
<svg class="ic" style="left:915px;top:518px" width="12" height="18" viewBox="0 0 12 18"><path d="M6 4 V13.4 M1.5 9.4 L6 13.5 L10.6 9.4" fill="none" stroke="#3274c6" stroke-width="1.3" stroke-linecap="round" stroke-linejoin="round"/></svg>
<svg class="ic" style="left:1190px;top:1036px" width="20" height="20" viewBox="0 0 20 20"><path d="M12.5 3 L6.5 10 L12.5 17" fill="none" stroke="#0b4a9d" stroke-width="1.7" stroke-linecap="round" stroke-linejoin="round"/></svg>
<div class="pg" style="left:1228.7px;top:1030px;background:#0b4a9d"></div>
<div class="t" style="left:1229.7px;top:1040.0px;width:30px;text-align:center;font-size:13px;color:#fff;">1</div>
<div class="t" style="left:1270.7px;top:1040.0px;width:30px;text-align:center;font-size:13px;color:#1a1a1a;">2</div>
<div class="t" style="left:1311.7px;top:1040.0px;width:30px;text-align:center;font-size:13px;color:#1a1a1a;">3</div>
<svg class="ic" style="left:1362px;top:1036px" width="20" height="20" viewBox="0 0 20 20"><path d="M7.5 3 L13.5 10 L7.5 17" fill="none" stroke="#0b4a9d" stroke-width="1.7" stroke-linecap="round" stroke-linejoin="round"/></svg>
</div>
</body></html>
